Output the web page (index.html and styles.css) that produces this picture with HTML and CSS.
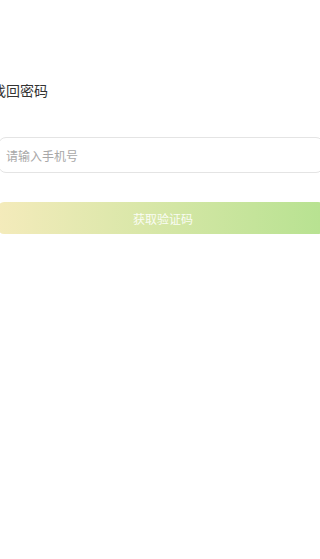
FILE: index.html
```html
<!DOCTYPE html>
<html lang="zh">
<head>
<meta charset="utf-8">
<link rel="stylesheet" href="styles.css">
</head>
<body>
<div class="page">
  <h1 class="title">找回密码</h1>
  <div class="field"><input class="input" type="text" placeholder="请输入手机号"></div>
  <button class="btn">获取验证码</button>
</div>
</body>
</html>
```
FILE: styles.css
```css
html, body { margin: 0; padding: 0; background: #fff; overflow: hidden; }
body { width: 320px; height: 559px; font-family: "Noto Sans CJK SC", "Noto Sans", sans-serif; }
.page { margin-left: -2px; width: 326px; padding-top: 80px; display: flex; flex-direction: column; }
.title { margin: 0 0 0 -6px; font-size: 14px; line-height: 21px; font-weight: 400; color: #333; }
.field { margin-top: 36px; height: 36px; border: 1px solid #e4e4e4; border-radius: 8px; display: flex; align-items: center; box-sizing: border-box; }
.input { border: 0; outline: 0; background: transparent; padding: 0 0 0 7px; font-family: inherit; font-size: 12px; color: #333; width: 100%; }
.input::placeholder { color: #a8a8a8; }
.btn { margin-top: 29px; height: 32px; border: 0; border-radius: 6px; background: linear-gradient(90deg, #f4ebbb 0%, #b7e291 100%); color: rgba(255,255,255,0.9); font-family: inherit; font-size: 12px; padding: 0 0 0 4px; }
```
